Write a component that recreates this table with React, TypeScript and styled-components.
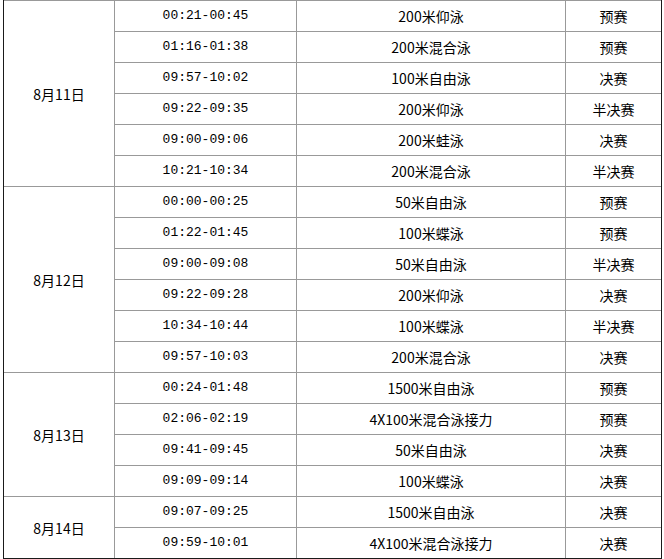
import styled, { createGlobalStyle } from "styled-components";

const GlobalStyle = createGlobalStyle`
  html, body {
    margin: 0;
    padding: 0;
    background: #fff;
  }
`;

const Schedule = styled.table`
  margin-left: 3px;
  border-collapse: separate;
  border-spacing: 0;
  border-left: 1px solid #1a1a1a;
  border-right: 1px solid #1a1a1a;
  border-bottom: 1px solid #1a1a1a;
  table-layout: fixed;
  color: #000;
  font-family: "Noto Sans CJK SC", "Noto Sans", sans-serif;
  font-size: 14px;
`;

const Col = styled.col<{ $w: number }>`
  width: ${(p) => p.$w}px;
`;

const Cell = styled.td<{ $first?: boolean }>`
  padding: 0;
  height: 30px;
  line-height: 30px;
  text-align: center;
  vertical-align: middle;
  white-space: nowrap;
  border-top: 1px solid #999;
  border-left: ${(p) => (p.$first ? "none" : "1px solid #999")};
`;

const TimeCell = styled(Cell)`
  font-family: "Liberation Mono", "DejaVu Sans Mono", monospace;
  font-size: 13px;
`;

type Race = [string, string, string];

const days: { date: string; races: Race[] }[] = [
  {
    date: "8月11日",
    races: [
      ["00:21-00:45", "200米仰泳", "预赛"],
      ["01:16-01:38", "200米混合泳", "预赛"],
      ["09:57-10:02", "100米自由泳", "决赛"],
      ["09:22-09:35", "200米仰泳", "半决赛"],
      ["09:00-09:06", "200米蛙泳", "决赛"],
      ["10:21-10:34", "200米混合泳", "半决赛"],
    ],
  },
  {
    date: "8月12日",
    races: [
      ["00:00-00:25", "50米自由泳", "预赛"],
      ["01:22-01:45", "100米蝶泳", "预赛"],
      ["09:00-09:08", "50米自由泳", "半决赛"],
      ["09:22-09:28", "200米仰泳", "决赛"],
      ["10:34-10:44", "100米蝶泳", "半决赛"],
      ["09:57-10:03", "200米混合泳", "决赛"],
    ],
  },
  {
    date: "8月13日",
    races: [
      ["00:24-01:48", "1500米自由泳", "预赛"],
      ["02:06-02:19", "4X100米混合泳接力", "预赛"],
      ["09:41-09:45", "50米自由泳", "决赛"],
      ["09:09-09:14", "100米蝶泳", "决赛"],
    ],
  },
  {
    date: "8月14日",
    races: [
      ["09:07-09:25", "1500米自由泳", "决赛"],
      ["09:59-10:01", "4X100米混合泳接力", "决赛"],
    ],
  },
];

export default function App() {
  return (
    <>
      <GlobalStyle />
      <Schedule>
        <colgroup>
          <Col $w={110} />
          <Col $w={182} />
          <Col $w={269} />
          <Col $w={96} />
        </colgroup>
        <tbody>
          {days.map((day) =>
            day.races.map(([time, event, stage], i) => (
              <tr key={day.date + i}>
                {i === 0 && (
                  <Cell $first rowSpan={day.races.length}>
                    {day.date}
                  </Cell>
                )}
                <TimeCell>{time}</TimeCell>
                <Cell>{event}</Cell>
                <Cell>{stage}</Cell>
              </tr>
            ))
          )}
        </tbody>
      </Schedule>
    </>
  );
}
